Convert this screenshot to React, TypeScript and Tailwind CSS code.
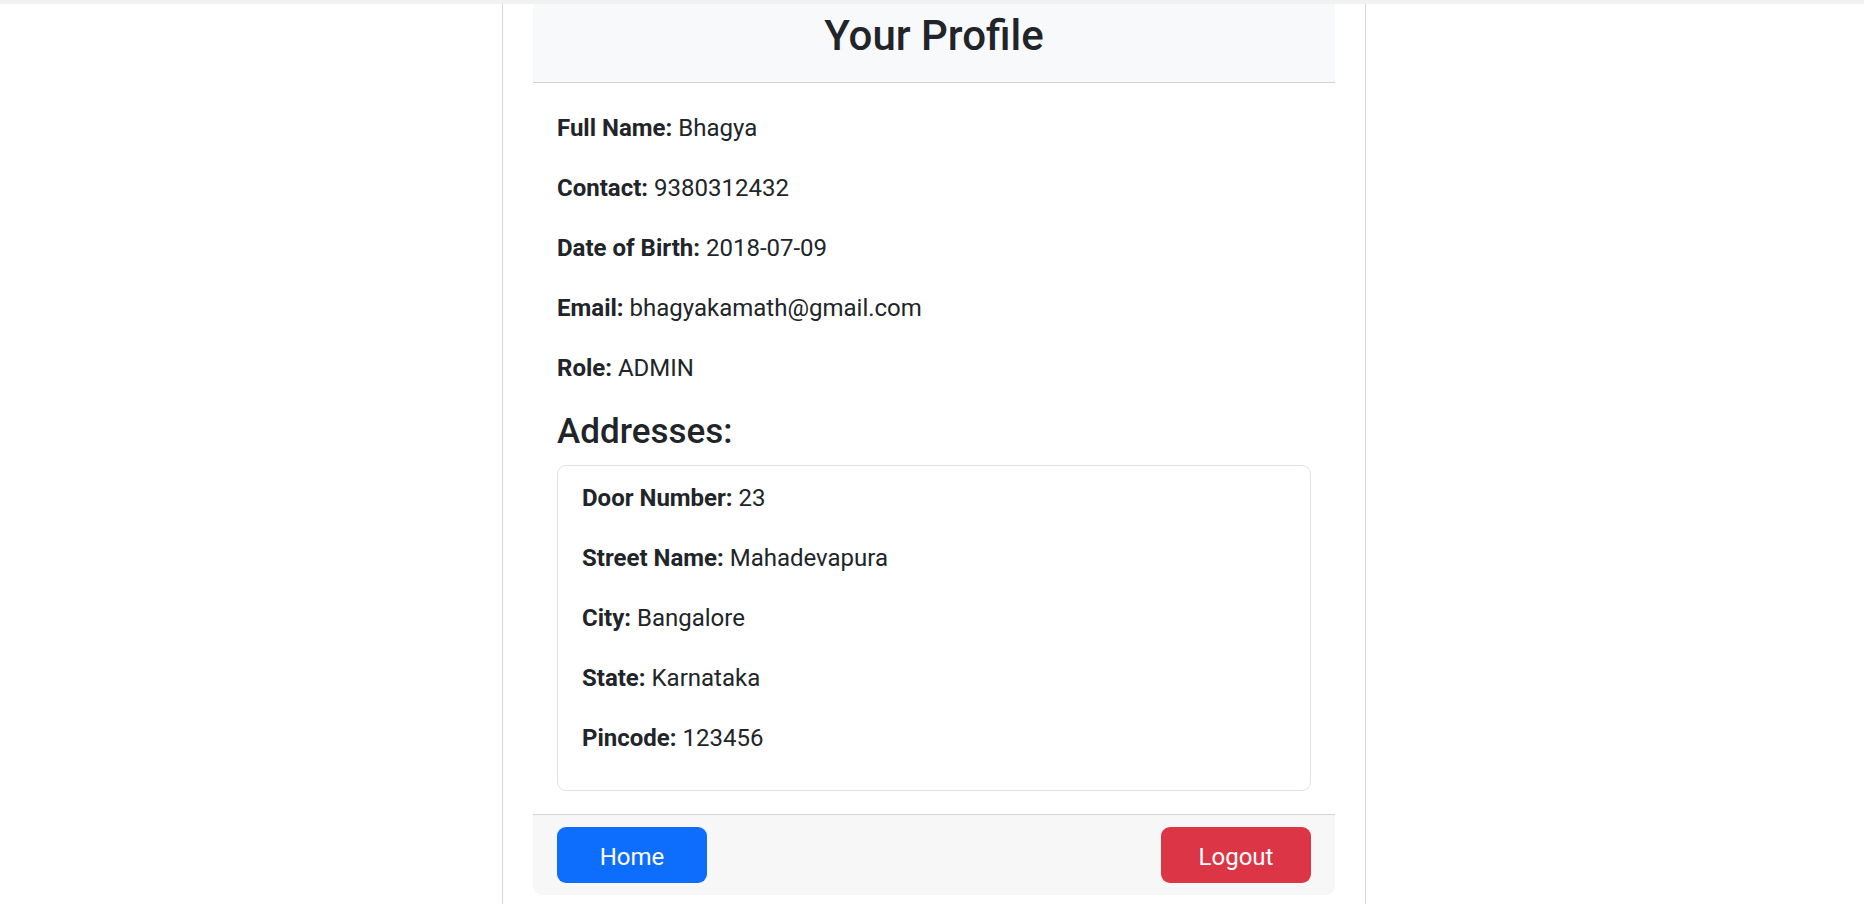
import { type ReactNode } from "react";

const font = { fontFamily: '"Segoe UI", Roboto, "Noto Sans", sans-serif' };

const Field = ({ label, children }: { label: string; children: ReactNode }) => (
  <p className="mb-[24px] text-[24px] leading-[36px]">
    <strong className="font-bold">{label}:</strong> {children}
  </p>
);

export default function App() {
  return (
    <div className="min-h-[904px] bg-white text-[#212529]" style={font}>
      <div className="h-[4px] w-full bg-[#f1f1f1]" />
      <div className="flex justify-center pl-[4px]">
        <div className="w-[864px] min-h-[900px] border-x border-[#d6d6d6] px-[30px]">
          <div className="rounded-b-[9px] bg-white">
            <div className="border-b border-[#d0d3d6] bg-[#f8f9fa] pt-[7px] pb-[20.6px] text-center">
              <h2 className="text-[42px] font-medium leading-[50.4px]">Your Profile</h2>
            </div>

            <div className="px-[24px] pt-[27px] pb-[23px]">
              <Field label="Full Name">Bhagya</Field>
              <Field label="Contact">9380312432</Field>
              <Field label="Date of Birth">2018-07-09</Field>
              <Field label="Email">bhagyakamath@gmail.com</Field>
              <Field label="Role">ADMIN</Field>

              <h4 className="mb-[12px] text-[35px] font-medium leading-[43.2px]">Addresses:</h4>
              <div className="rounded-[9px] border border-[#dee2e6] px-[24px] pt-[14px] pb-[10px]">
                <Field label="Door Number">23</Field>
                <Field label="Street Name">Mahadevapura</Field>
                <Field label="City">Bangalore</Field>
                <Field label="State">Karnataka</Field>
                <Field label="Pincode">123456</Field>
              </div>
            </div>

            <div className="flex items-center justify-between rounded-b-[9px] border-t border-[#d3d3d3] bg-[#f7f7f7] px-[24px] py-[12px]">
              <button className="h-[56px] w-[150px] rounded-[9px] bg-[#0d6efd] pt-[3px] text-[24px] text-white">
                Home
              </button>
              <button className="h-[56px] w-[150px] rounded-[9px] bg-[#dc3545] pt-[3px] text-[24px] text-white">
                Logout
              </button>
            </div>
          </div>
        </div>
      </div>
    </div>
  );
}
